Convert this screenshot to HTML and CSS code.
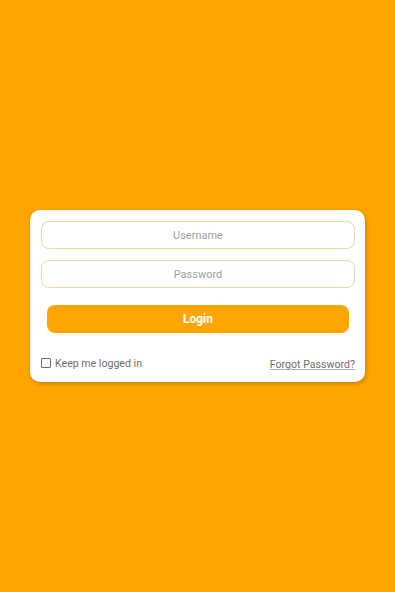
FILE: index.html
```html
<!DOCTYPE html>
<html>
<head>
<meta charset="utf-8">
<link rel="stylesheet" href="styles.css">
</head>
<body>
<main class="page">
  <form class="card">
    <input class="field" type="text" placeholder="Username">
    <input class="field" type="password" placeholder="Password">
    <button class="login" type="button">Login</button>
    <div class="extras">
      <label class="keep"><span class="box"></span>Keep me logged in</label>
      <a class="forgot" href="#">Forgot Password?</a>
    </div>
  </form>
</main>
</body>
</html>
```

FILE: styles.css
```css
html, body {
  margin: 0;
  padding: 0;
  height: 100%;
}
body {
  background: #ffa500;
  font-family: Roboto, "Noto Sans", sans-serif;
}
.page {
  height: 100%;
  display: flex;
  align-items: center;
  justify-content: center;
}
.card {
  width: 335px;
  box-sizing: border-box;
  background: #fff;
  border-radius: 10px;
  padding: 11px 10px 0 11px;
  box-shadow: 1px 2px 4px rgba(0, 0, 0, 0.22);
  display: flex;
  flex-direction: column;
  height: 172px;
}
.field {
  box-sizing: border-box;
  height: 28px;
  width: 100%;
  margin: 0 0 11px 0;
  border: 1px solid #e6dba6;
  border-radius: 8px;
  background: #fff;
  text-align: center;
  font-family: Roboto, sans-serif;
  font-size: 11px;
  color: #555;
  outline: none;
  padding: 0;
}
.field::placeholder {
  color: #a0a0a0;
}
.login {
  margin: 6px 6px 0 6px;
  height: 28px;
  border: none;
  border-radius: 8px;
  background: #ffa500;
  color: #fff;
  font-family: Roboto, sans-serif;
  font-weight: bold;
  font-size: 12px;
  padding: 0;
}
.extras {
  display: flex;
  justify-content: space-between;
  align-items: center;
  margin-top: 22px;
  font-size: 10.6px;
  color: #6e6e6e;
}
.keep {
  display: flex;
  align-items: center;
  gap: 4px;
}
.box {
  width: 8px;
  height: 8px;
  border: 1px solid #6e6e6e;
  border-radius: 1px;
}
.forgot {
  color: #6e6e6e;
  text-decoration: underline;
  text-decoration-color: #aaa;
  margin-top: 3px;
}
```
